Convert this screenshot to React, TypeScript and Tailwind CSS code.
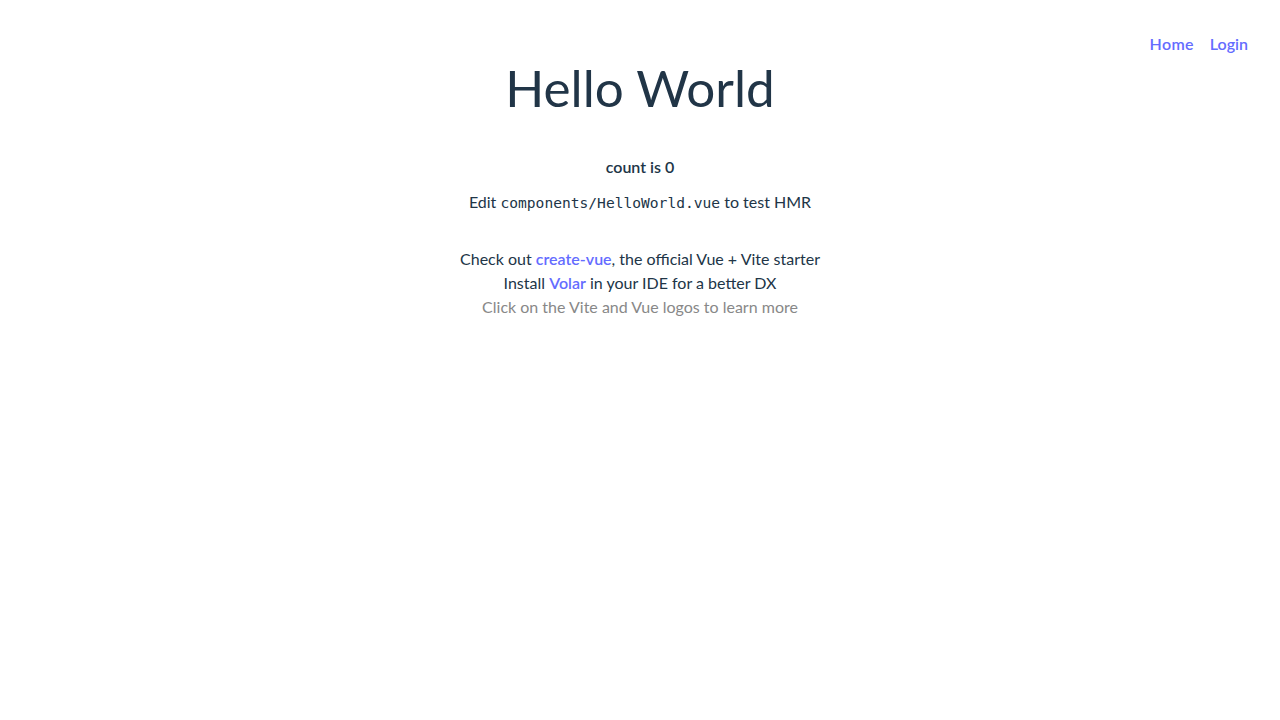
export default function App() {
	return (
		<div className="min-h-screen bg-white px-8 pt-8 text-center font-['Lato','Open_Sans',sans-serif] text-base leading-6 text-[#213547]">
			<nav className="flex justify-end gap-4 font-semibold text-[#646cff]">
				<a href="#" className="tracking-[0.02em]">Home</a>
				<a href="#">Login</a>
			</nav>
			<h1 className="mt-[3px] text-[51.2px] leading-[1.1] font-normal">Hello World</h1>
			<div className="mt-[40px]">
				<p className="font-semibold">count is 0</p>
				<p className="mt-[11px]">
					Edit <code className="font-['DejaVu_Sans_Mono',monospace] text-[14.6px]">components/HelloWorld.vue</code> to test HMR
				</p>
			</div>
			<div className="mt-[32px]">
				<p>
					Check out{" "}
					<a href="#" className="font-semibold text-[#646cff]">
						create-vue
					</a>
					, the official Vue + Vite starter
				</p>
				<p>
					Install{" "}
					<a href="#" className="font-semibold text-[#646cff]">
						Volar
					</a>{" "}
					in your IDE for a better DX
				</p>
				<p className="text-[#888]">Click on the Vite and Vue logos to learn more</p>
			</div>
		</div>
	);
}
